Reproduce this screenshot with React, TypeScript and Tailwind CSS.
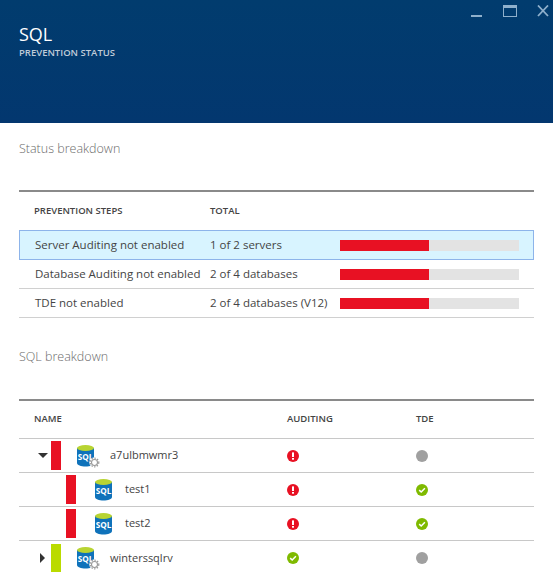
const FONT = "font-['Open_Sans','Noto_Sans',sans-serif]";

const steps = [
  { name: 'Server Auditing not enabled', total: '1 of 2 servers', selected: true },
  { name: 'Database Auditing not enabled', total: '2 of 4 databases', selected: false },
  { name: 'TDE not enabled', total: '2 of 4 databases (V12)', selected: false },
];

type Status = 'error' | 'ok' | 'none';

const servers: { name: string; child: boolean; caret?: 'open' | 'closed'; bar: string; auditing: Status; tde: Status }[] = [
  { name: 'a7ulbmwmr3', child: false, caret: 'open', bar: 'bg-[#e81123]', auditing: 'error', tde: 'none' },
  { name: 'test1', child: true, bar: 'bg-[#e81123]', auditing: 'error', tde: 'ok' },
  { name: 'test2', child: true, bar: 'bg-[#e81123]', auditing: 'error', tde: 'ok' },
  { name: 'winterssqlrv', child: false, caret: 'closed', bar: 'bg-[#badb00]', auditing: 'ok', tde: 'none' },
];

const StatusIcon = ({ status }: { status: Status }) => {
  if (status === 'none') {
    return <div className="w-3 h-3 rounded-full bg-[#a0a0a0]" />;
  }
  if (status === 'error') {
    return (
      <svg width="12" height="12" viewBox="0 0 12 12" className="block">
        <circle cx="6" cy="6" r="6" fill="#e81123" />
        <rect x="5" y="2.4" width="2" height="4.6" fill="#fff" />
        <rect x="5" y="8" width="2" height="1.7" fill="#fff" />
      </svg>
    );
  }
  return (
    <svg width="12" height="12" viewBox="0 0 12 12" className="block">
      <circle cx="6" cy="6" r="6" fill="#7fba00" />
      <path d="M3.2 6.1 L5.2 8 L8.9 4.2" fill="none" stroke="#fff" strokeWidth="1.5" />
    </svg>
  );
};

const SqlIcon = ({ gear }: { gear: boolean }) => (
  <svg width="24" height="24" viewBox="0 0 24 24" className="block">
    <path d="M1 4 V19 C1 21.2 5 22.5 9.5 22.5 C14 22.5 18 21.2 18 19 V4 Z" fill="#0f72ba" />
    <ellipse cx="9.5" cy="4" rx="8.5" ry="3" fill="#b8d432" />
    <text x="9.5" y="16" textAnchor="middle" fontSize="8.2" fontWeight="700" fill="#fff" fontFamily="Open Sans, sans-serif">
      SQL
    </text>
    {gear && (
      <g>
        <circle cx="18.5" cy="18.5" r="5.2" fill="#fff" />
        <circle cx="18.5" cy="18.5" r="3" fill="#fff" stroke="#9a9a9a" strokeWidth="1.1" />
        <circle cx="18.5" cy="18.5" r="4.3" fill="none" stroke="#9a9a9a" strokeWidth="1.2" strokeDasharray="1.4 1.4" />
      </g>
    )}
  </svg>
);

export default function App() {
  return (
    <div className={`w-[553px] h-[572px] overflow-hidden bg-white ${FONT}`}>
      {/* Blade header */}
      <div className="h-[123px] bg-gradient-to-b from-[#013c6e] to-[#03376f] pl-[19px] relative">
        <div className="absolute top-[5px] right-[4px] flex items-start">
          <div className="mt-[10px] w-[11px] h-[2px] bg-[#8fb0cc]" />
          <div className="ml-[21px] w-[14px] h-[12px] border border-[#8fb0cc] border-t-[3px]" />
          <svg width="12" height="12" viewBox="0 0 12 12" className="ml-[20px]">
            <path d="M1 0.5 L11 11 M11 0.5 L1 11" stroke="#8fb0cc" strokeWidth="1.8" />
          </svg>
        </div>
        <div className="pt-[22px] text-[18px] leading-[24px] text-white">SQL</div>
        <div className="mt-[1px] text-[9.5px] leading-[12px] font-semibold text-[#c0ccd9]">PREVENTION STATUS</div>
      </div>

      <div className="px-[19px]">
        <div className="pt-[18px] text-[12.5px] leading-[16px] font-light text-[#6a6a6a]">Status breakdown</div>

        {/* Prevention steps */}
        <div className="mt-[33px] border-t-2 border-[#8a8a8a]">
          <div className="flex h-[38px] items-center pl-[15px] text-[9.5px] font-semibold text-[#444]">
            <div className="w-[176px]">PREVENTION STEPS</div>
            <div>TOTAL</div>
          </div>
          {steps.map((s) => (
            <div
              key={s.name}
              className={`flex items-center text-[11.5px] text-[#444] ${
                s.selected ? 'h-[30px] pl-[15px] bg-[#d8f4ff] border border-[#8db4ea]' : 'h-[29px] pl-[16px] border-b border-[#d0d0d0]'
              }`}
            >
              <div className="w-[175px] whitespace-nowrap">{s.name}</div>
              <div className="w-[130px] whitespace-nowrap">{s.total}</div>
              <div className="flex w-[179px] h-[11px]">
                <div className="w-[89px] bg-[#e81123]" />
                <div className="flex-1 bg-[#e3e3e3]" />
              </div>
            </div>
          ))}
        </div>

        <div className="pt-[31px] text-[12.5px] leading-[16px] font-light text-[#6a6a6a]">SQL breakdown</div>

        {/* SQL servers */}
        <div className="mt-[34px] border-t-2 border-[#8a8a8a]">
          <div className="grid grid-cols-[253px_129px_1fr] h-[38px] items-center pl-[15px] text-[9.5px] font-semibold text-[#444] border-b border-[#c8c8c8]">
            <div>NAME</div>
            <div>AUDITING</div>
            <div>TDE</div>
          </div>
          {servers.map((s, i) => (
            <div
              key={s.name}
              className={`grid grid-cols-[268px_129px_1fr] h-[34px] items-center text-[11px] text-[#444] ${
                i < servers.length - 1 ? 'border-b border-[#c8c8c8]' : ''
              }`}
            >
              <div className="flex items-center h-full">
                <div className="w-[32px] flex justify-end">
                  {s.caret === 'open' && (
                    <div className="mr-[3px] w-0 h-0 border-l-[5px] border-r-[5px] border-t-[5px] border-l-transparent border-r-transparent border-t-[#333]" />
                  )}
                  {s.caret === 'closed' && (
                    <div className="mr-[6px] w-0 h-0 border-t-[5px] border-b-[5px] border-l-[5px] border-t-transparent border-b-transparent border-l-[#333]" />
                  )}
                </div>
                <div className={`h-[29px] w-[10px] ${s.bar} ${s.child ? 'ml-[15px]' : ''}`} />
                <div className={s.child ? 'ml-[18px]' : 'ml-[15px]'}>
                  <SqlIcon gear={!s.child} />
                </div>
                <div className={s.child ? 'ml-[7px]' : 'ml-[10px]'}>{s.name}</div>
              </div>
              <StatusIcon status={s.auditing} />
              <StatusIcon status={s.tde} />
            </div>
          ))}
        </div>
      </div>
    </div>
  );
}
